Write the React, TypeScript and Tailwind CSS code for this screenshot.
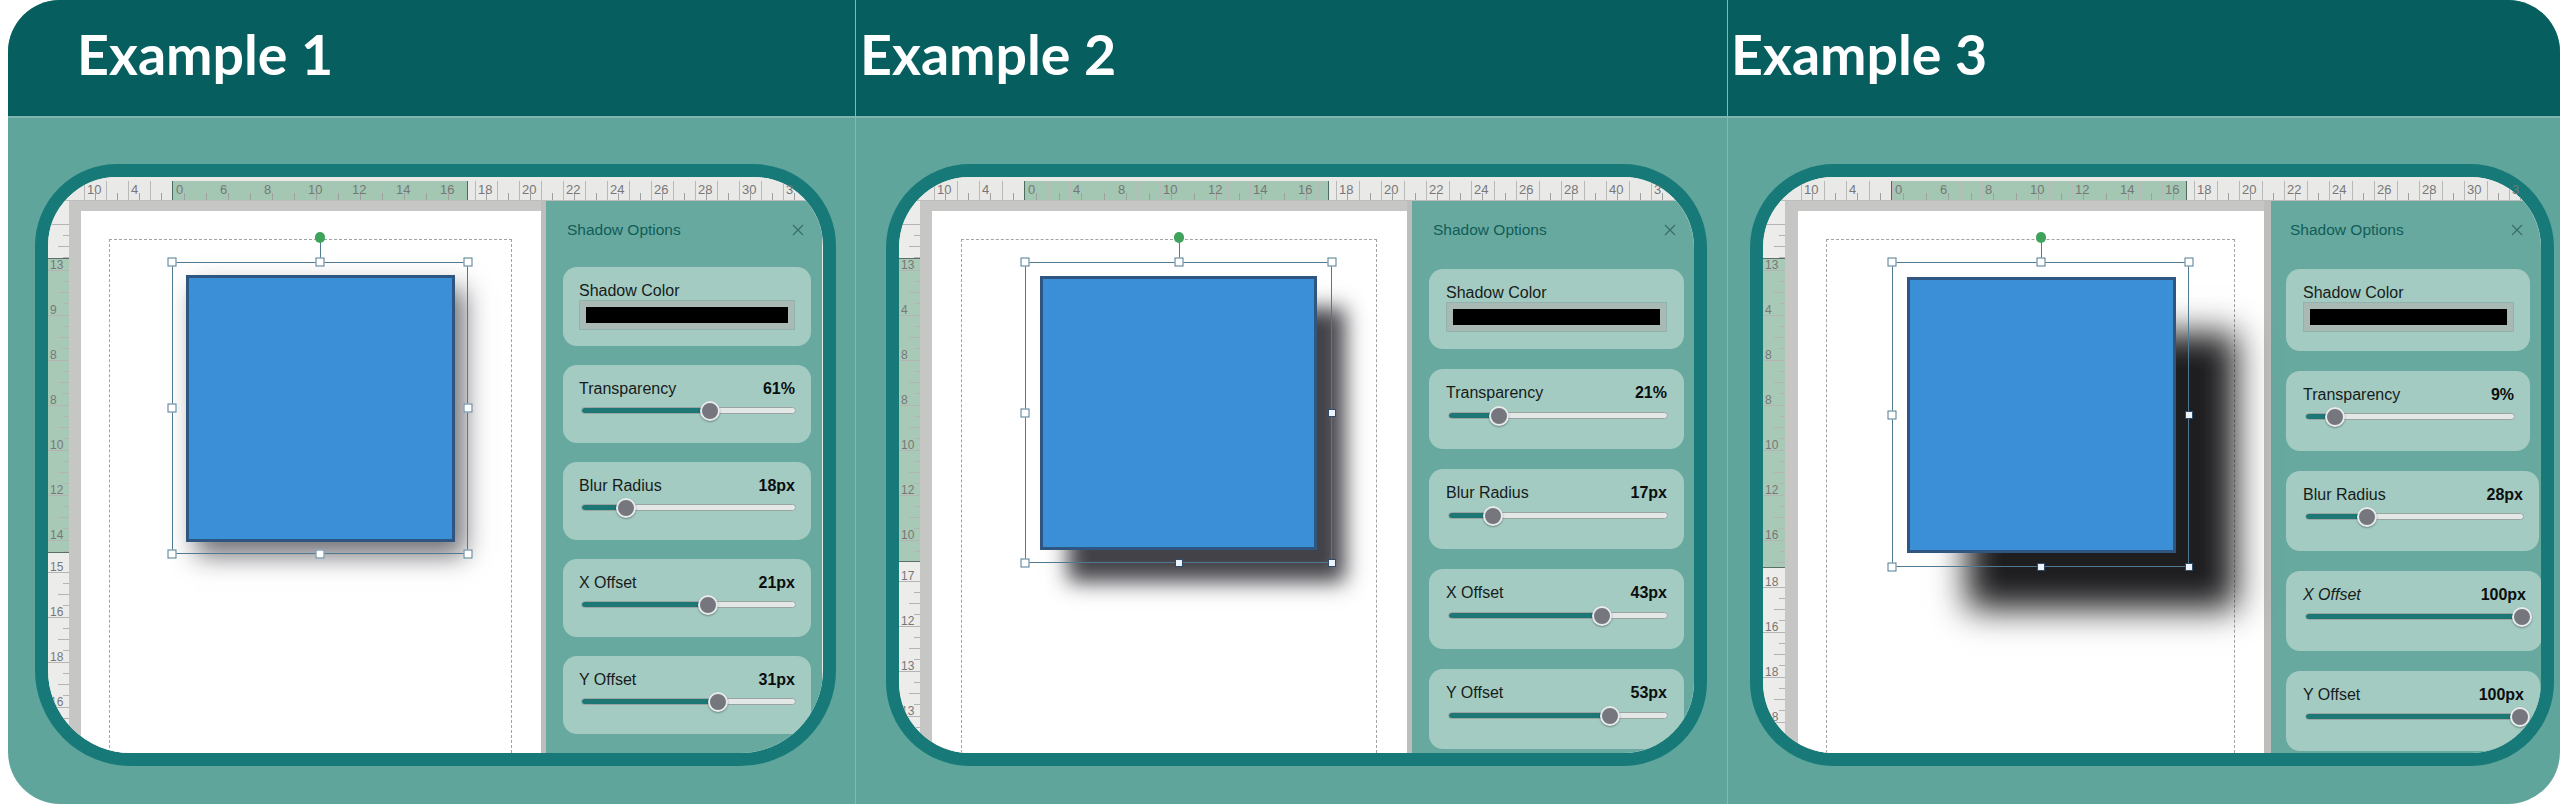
import React from "react";

type Control = {
  label: string;
  value: string;
  percent: number;
  width: string;
  italic?: boolean;
};

type Example = {
  title: string;
  headClass: string;
  column: string;
  frame: string;
  pitch: string;
  rulerLeft: string;
  rulerGreen: string;
  topGreen: string[];
  topRight: string[];
  sideTop: string;
  sideGreen: string;
  sideGreenLabels: string[];
  sideRest: string[];
  sideWidth: string;
  gutter: string;
  page: string;
  strip: string;
  dashed: string;
  selection: string;
  blue: string;
  panel: string;
  titleRow: string;
  titleGap: string;
  cardGap: string;
  cardHeight: string;
  cardPad: string;
  sliderGap: string;
  swatchCard: string;
  controls: Control[];
  solidHandles: boolean;
};

const examples: Example[] = [
  {
    title: "Example 1",
    headClass: "pl-[69px]",
    column: "pl-[27px]",
    frame: "w-[801px] rounded-t-[82px] rounded-b-[96px]",
    pitch: "w-[44px]",
    rulerLeft: "w-[124px]",
    rulerGreen: "w-[296px]",
    topGreen: ["0", "6", "8", "10", "12", "14", "16"],
    topRight: ["18", "20", "22", "24", "26", "28", "30", "3"],
    sideTop: "h-[57px]",
    sideGreen: "h-[295px]",
    sideGreenLabels: ["13", "9", "8", "8", "10", "12", "14"],
    sideRest: ["15", "16", "18", "16"],
    sideWidth: "w-[21px]",
    gutter: "w-[12px]",
    page: "w-[460px]",
    strip: "w-[5px]",
    dashed: "ml-[28px] w-[403px]",
    selection: "ml-[62px] w-[296px] h-[292px]",
    blue: "ml-[14px] mt-[13px] w-[269px] h-[267px] shadow-[10px_14px_24px_rgba(20,20,30,0.6)]",
    panel: "pl-[17px] w-[276px]",
    titleRow: "w-[237px]",
    titleGap: "mb-[27px]",
    cardGap: "gap-[19px]",
    cardHeight: "h-[78px]",
    cardPad: "pl-[16px] pr-[16px]",
    sliderGap: "mt-[8px]",
    swatchCard: "w-[248px] h-[79px]",
    controls: [
      { label: "Transparency", value: "61%", percent: 60, width: "w-[248px]" },
      { label: "Blur Radius", value: "18px", percent: 20.5, width: "w-[248px]" },
      { label: "X Offset", value: "21px", percent: 59, width: "w-[248px]" },
      { label: "Y Offset", value: "31px", percent: 64, width: "w-[248px]" },
    ],
    solidHandles: false,
  },
  {
    title: "Example 2",
    headClass: "pl-[4px]",
    column: "pl-[30px]",
    frame: "w-[821px] rounded-[84px]",
    pitch: "w-[45px]",
    rulerLeft: "w-[125px]",
    rulerGreen: "w-[305px]",
    topGreen: ["0", "4", "8", "10", "12", "14", "16"],
    topRight: ["18", "20", "22", "24", "26", "28", "40", "3"],
    sideTop: "h-[57px]",
    sideGreen: "h-[304px]",
    sideGreenLabels: ["13", "4", "8", "8", "10", "12", "10"],
    sideRest: ["17", "12", "13", "13"],
    sideWidth: "w-[21px]",
    gutter: "w-[12px]",
    page: "w-[475px]",
    strip: "w-[5px]",
    dashed: "ml-[29px] w-[416px]",
    selection: "ml-[63px] w-[307px] h-[301px]",
    blue: "ml-[15px] mt-[14px] w-[277px] h-[274px] shadow-[28px_32px_20px_rgba(50,50,56,0.92)]",
    panel: "pl-[17px] w-[282px]",
    titleRow: "w-[243px]",
    titleGap: "mb-[29px]",
    cardGap: "gap-[20px]",
    cardHeight: "h-[80px]",
    cardPad: "pl-[17px] pr-[17px]",
    sliderGap: "mt-[9px]",
    swatchCard: "w-[255px] h-[80px]",
    controls: [
      { label: "Transparency", value: "21%", percent: 23, width: "w-[255px]" },
      { label: "Blur Radius", value: "17px", percent: 20, width: "w-[255px]" },
      { label: "X Offset", value: "43px", percent: 70, width: "w-[255px]" },
      { label: "Y Offset", value: "53px", percent: 74, width: "w-[255px]" },
    ],
    solidHandles: true,
  },
  {
    title: "Example 3",
    headClass: "pl-[3px]",
    column: "pl-[22px]",
    frame: "w-[804px] rounded-[84px]",
    pitch: "w-[45px]",
    rulerLeft: "w-[128px]",
    rulerGreen: "w-[296px]",
    topGreen: ["0", "6", "8", "10", "12", "14", "16"],
    topRight: ["18", "20", "22", "24", "26", "28", "30", "3"],
    sideTop: "h-[57px]",
    sideGreen: "h-[310px]",
    sideGreenLabels: ["13", "4", "8", "8", "10", "12", "16"],
    sideRest: ["18", "16", "18", "18"],
    sideWidth: "w-[22px]",
    gutter: "w-[13px]",
    page: "w-[466px]",
    strip: "w-[7px]",
    dashed: "ml-[28px] w-[409px]",
    selection: "ml-[65px] w-[297px] h-[305px]",
    blue: "ml-[15px] mt-[15px] w-[269px] h-[276px] shadow-[60px_56px_32px_rgba(25,25,28,0.98)]",
    panel: "pl-[15px] w-[270px]",
    titleRow: "w-[233px]",
    titleGap: "mb-[29px]",
    cardGap: "gap-[20px]",
    cardHeight: "h-[80px]",
    cardPad: "pl-[17px] pr-[16px]",
    sliderGap: "mt-[8px]",
    swatchCard: "w-[244px] h-[82px]",
    controls: [
      { label: "Transparency", value: "9%", percent: 14, width: "w-[244px]" },
      { label: "Blur Radius", value: "28px", percent: 28, width: "w-[253px]" },
      { label: "X Offset", value: "100px", percent: 98, width: "w-[256px]", italic: true },
      { label: "Y Offset", value: "100px", percent: 98, width: "w-[254px]" },
    ],
    solidHandles: true,
  },
];

const handles = [
  { pos: "left-0 top-0", solid: false },
  { pos: "left-1/2 top-0", solid: false },
  { pos: "left-full top-0", solid: false },
  { pos: "left-0 top-1/2", solid: false },
  { pos: "left-full top-1/2", solid: true },
  { pos: "left-0 top-full", solid: false },
  { pos: "left-1/2 top-full", solid: true },
  { pos: "left-full top-full", solid: true },
];

function TopCell({ label, pitch }: { label: string; pitch: string }) {
  return (
    <div className={`${pitch} flex h-full shrink-0`}>
      <div className="flex w-1/2 justify-center border-l border-[#b9b9b9]">
        <span className="mt-auto h-[7px] w-px bg-[#a0a0a0]" />
      </div>
      <div className="relative flex w-1/2 justify-center border-l border-[#b9b9b9]">
        <span className="mt-auto h-[7px] w-px bg-[#a0a0a0]" />
      </div>
      <span className="absolute mt-[1px] ml-[3px] text-[13px] leading-[16px] text-[#777]">{label}</span>
    </div>
  );
}

function TopRuler({ ex }: { ex: Example }) {
  return (
    <div className="h-[24px] shrink-0 bg-[#e9e9e7] pt-[4px]">
      <div className="flex h-[20px] border-b border-[#bdbdbd]">
        <div className={`${ex.rulerLeft} flex shrink-0 justify-end overflow-hidden`}>
          <TopCell label="10" pitch={ex.pitch} />
          <TopCell label="4" pitch={ex.pitch} />
        </div>
        <div className={`${ex.rulerGreen} flex shrink-0 overflow-hidden border-x border-[#4d6b63] bg-[#a3c7b3]`}>
          {ex.topGreen.map((label, i) => (
            <TopCell key={i} label={label} pitch={ex.pitch} />
          ))}
        </div>
        <div className="flex flex-1 overflow-hidden pl-[7px]">
          {ex.topRight.map((label, i) => (
            <TopCell key={i} label={label} pitch={ex.pitch} />
          ))}
        </div>
      </div>
    </div>
  );
}

function SideCell({ label }: { label: string }) {
  return (
    <div className="h-[45px] shrink-0">
      <div className="h-[12px] border-b border-[#b4b4b4] pl-[2px] text-[12px] leading-[12px] text-[#777]">{label}</div>
      <div className="ml-auto h-[11px] w-[6px] border-b border-[#b4b4b4]" />
      <div className="ml-auto h-[11px] w-[11px] border-b border-[#b4b4b4]" />
      <div className="ml-auto h-[11px] w-[6px] border-b border-[#b4b4b4]" />
    </div>
  );
}

function SideRuler({ ex }: { ex: Example }) {
  return (
    <div className={`${ex.sideWidth} flex shrink-0 flex-col overflow-hidden bg-[#ececea]`}>
      <div className={`${ex.sideTop} flex shrink-0 flex-col justify-end overflow-hidden`}>
        <SideCell label="" />
      </div>
      <div className={`${ex.sideGreen} shrink-0 overflow-hidden border-y border-[#5b6f68] bg-[#a8c9b6]`}>
        {ex.sideGreenLabels.map((label, i) => (
          <SideCell key={i} label={label} />
        ))}
      </div>
      <div className="pt-[8px]">
        {ex.sideRest.map((label, i) => (
          <SideCell key={i} label={label} />
        ))}
      </div>
    </div>
  );
}

function Canvas({ ex }: { ex: Example }) {
  return (
    <div className={`${ex.page} flex shrink-0 flex-col bg-[#c6c6c4] pt-[10px]`}>
      <div className="flex flex-1 flex-col bg-white pt-[28px]">
        <div className={`${ex.dashed} flex-1 border-x border-t border-dashed border-[#a3a3a3] pt-[22px]`}>
          <div className={`${ex.selection} relative flow-root`}>
            <div className={`${ex.blue} border-[3px] border-[#2f5680] bg-[#3b8fd6]`} />
            <div className="absolute inset-0 border border-[#4f7a92]" />
            <div className="absolute left-1/2 top-[-25px] h-[25px] w-px bg-[#4f7a92]" />
            <div className="absolute left-1/2 top-[-30px] h-[11px] w-[10px] -translate-x-1/2 rounded-full bg-[#3fa35c]" />
            {handles.map((h) => (
              <div
                key={h.pos}
                className={
                  ex.solidHandles && h.solid
                    ? `absolute ${h.pos} h-[8px] w-[8px] -translate-x-1/2 -translate-y-1/2 border border-[#2f4d6b] bg-[#edf3fb]`
                    : `absolute ${h.pos} h-[9px] w-[9px] -translate-x-1/2 -translate-y-1/2 border border-[#4f7a92] bg-white`
                }
              />
            ))}
          </div>
        </div>
      </div>
    </div>
  );
}

function SliderCard({ control, ex }: { control: Control; ex: Example }) {
  return (
    <div className={`${ex.cardHeight} ${ex.cardPad} ${control.width} shrink-0 rounded-[14px] bg-[#a4cbc2] pt-[14px]`}>
      <div className="flex h-[20px] items-center justify-between text-[16px] leading-[20px] text-[#161c1b]">
        <span className={control.italic ? "italic" : ""}>{control.label}</span>
        <span className="font-bold text-[#0b0f0f]">{control.value}</span>
      </div>
      <div className={`${ex.sliderGap} relative ml-[2px] -mr-[1px] h-[7px] rounded-full border border-[#9aa5a2] bg-[#e3e8e6]`}>
        <div className="h-full rounded-full bg-[#1d7774]" style={{ width: `${control.percent}%` }} />
        <div
          className="absolute top-1/2 h-[20px] w-[20px] -translate-x-1/2 -translate-y-1/2 rounded-full border-2 border-[#e6eceb] bg-[#76767e] shadow-[0_1px_2px_rgba(0,0,0,0.35)]"
          style={{ left: `${control.percent}%` }}
        />
      </div>
    </div>
  );
}

function Panel({ ex }: { ex: Example }) {
  return (
    <div className={`${ex.panel} shrink-0 bg-[#68a99f] pt-[19px]`}>
      <div className={`${ex.titleRow} ${ex.titleGap} ml-[4px] flex h-[20px] items-center justify-between text-[15.5px] text-[#0f5d59]`}>
        <span>Shadow Options</span>
        <svg width="12" height="12" viewBox="0 0 12 12" fill="none" stroke="#3a6d6a" strokeWidth="1.2">
          <path d="M1 1L11 11M11 1L1 11" />
        </svg>
      </div>
      <div className={`${ex.cardGap} flex flex-col`}>
        <div className={`${ex.swatchCard} ${ex.cardPad} shrink-0 rounded-[14px] bg-[#a4cbc2] pt-[14px]`}>
          <div className="h-[20px] text-[16px] leading-[20px] text-[#161c1b]">Shadow Color</div>
          <div className="-mt-[1px] h-[30px] border border-[#92b3ab] bg-[#a9bab4] p-[6px]">
            <div className="h-full bg-black" />
          </div>
        </div>
        {ex.controls.map((control) => (
          <SliderCard key={control.label} control={control} ex={ex} />
        ))}
      </div>
    </div>
  );
}

function Frame({ ex }: { ex: Example }) {
  return (
    <div className={`${ex.frame} flex h-[602px] flex-col overflow-hidden border-[13px] border-[#187a78] bg-[#e9e9e7]`}>
      <TopRuler ex={ex} />
      <div className="flex min-h-0 flex-1">
        <SideRuler ex={ex} />
        <div className={`${ex.gutter} shrink-0 bg-[#c6c6c4]`} />
        <Canvas ex={ex} />
        <div className={`${ex.strip} shrink-0 bg-[#bdbdbb]`} />
        <Panel ex={ex} />
      </div>
    </div>
  );
}

export default function App() {
  return (
    <div className="h-[804px] w-[2560px] bg-white pl-[8px] font-['Liberation_Sans',sans-serif]">
      <div className="grid h-full grid-cols-[847px_872px_833px] overflow-hidden rounded-[52px] bg-[#5fa59b]">
        {examples.map((ex, i) => (
          <div key={ex.title} className={i === 0 ? "" : "border-l border-[#85b8b0]"}>
            <div className={`${ex.headClass} flex h-[118px] items-center border-b-2 border-[#7fb5ad] bg-[#075e5f] pb-[8px]`}>
              <h1 className="font-['Lato',sans-serif] text-[55.5px] font-bold text-white">{ex.title}</h1>
            </div>
            <div className={`${ex.column} pt-[46px]`}>
              <Frame ex={ex} />
            </div>
          </div>
        ))}
      </div>
    </div>
  );
}
